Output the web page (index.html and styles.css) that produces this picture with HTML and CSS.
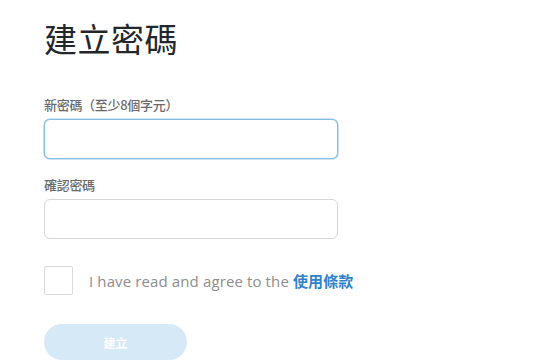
FILE: index.html
```
<!DOCTYPE html>
<html lang="zh-Hant">
<head>
<meta charset="utf-8">
<title>建立密碼</title>
<link rel="stylesheet" href="styles.css">
</head>
<body>
<main class="page">
  <h1 class="title">建立密碼</h1>
  <form class="form">
    <div class="field">
      <label class="label" for="pw">新密碼（至少8個字元）</label>
      <input class="input input-focus" id="pw" type="password">
    </div>
    <div class="field">
      <label class="label" for="pw2">確認密碼</label>
      <input class="input" id="pw2" type="password">
    </div>
    <div class="terms">
      <span class="checkbox"></span>
      <span class="terms-text">I have read and agree to the <a class="link" href="#">使用條款</a></span>
    </div>
    <button class="btn" type="button">建立</button>
  </form>
</main>
</body>
</html>
```

FILE: styles.css
```
html, body {
  margin: 0;
  padding: 0;
  background: #ffffff;
}
body {
  font-family: "Open Sans", "Noto Sans CJK TC", sans-serif;
  overflow: hidden;
  height: 360px;
}
.page {
  padding: 18px 0 0 44px;
}
.title {
  margin: 0 0 39px 0;
  font-family: "Noto Sans CJK TC", sans-serif;
  font-size: 33px;
  line-height: 40px;
  font-weight: 400;
  color: #24272a;
  letter-spacing: 0.5px;
}
.form {
  display: flex;
  flex-direction: column;
}
.field {
  display: flex;
  flex-direction: column;
  gap: 6px;
  margin-bottom: 18px;
}
.field + .field {
  margin-bottom: 27px;
}
.label {
  font-family: "Noto Sans CJK TC", sans-serif;
  font-size: 13px;
  line-height: 16px;
  font-weight: 500;
  color: #6a6a6a;
  letter-spacing: -0.3px;
}
.input {
  box-sizing: border-box;
  width: 294px;
  height: 40px;
  border: 1px solid #d6d6d6;
  border-radius: 6px;
  background: #fff;
  outline: none;
  margin: 0;
}
.input-focus {
  border-color: #86bde2;
  box-shadow: 0 0 0 0.6px #9cc9e8;
}
.terms {
  display: flex;
  align-items: center;
  gap: 16px;
  height: 29px;
  margin-bottom: 29px;
}
.checkbox {
  box-sizing: border-box;
  width: 29px;
  height: 29px;
  border: 1px solid #d9d9d9;
  border-radius: 2px;
  flex: none;
}
.terms-text {
  font-size: 15px;
  color: #8d8d8d;
  line-height: 20px;
  letter-spacing: 0.12px;
}
.link {
  font-family: "Noto Sans CJK TC", sans-serif;
  color: #2f82c9;
  font-weight: 700;
  text-decoration: none;
}
.btn {
  width: 143px;
  height: 36px;
  border: none;
  border-radius: 18px;
  background: #d6e9f7;
  color: #ffffff;
  font-family: "Noto Sans CJK TC", sans-serif;
  font-size: 12px;
  font-weight: 700;
  padding: 0;
  margin: 0;
}
```
